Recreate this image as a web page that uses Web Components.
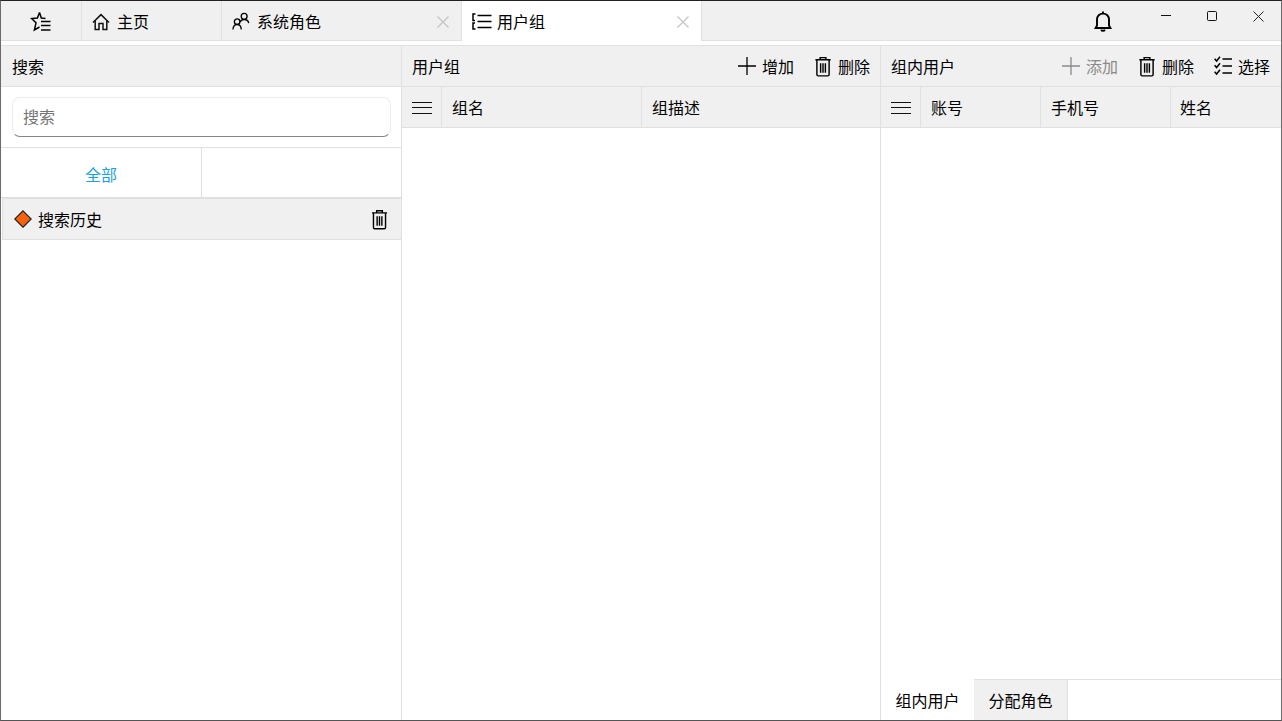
<!DOCTYPE html>
<html lang="zh">
<head>
<meta charset="UTF-8">
<title>用户组</title>
<style>
  html, body { margin: 0; height: 100%; overflow: hidden; background: #fff; }
  body { font: 16px "Noto Sans CJK SC", sans-serif; color: #000; }
</style>
</head>
<body>
<app-window>
  <title-bar slot="top">
    <nav-tab kind="fav" icon="fav" style="width:81px"></nav-tab>
    <nav-tab icon="home" style="width:140px">主页</nav-tab>
    <nav-tab icon="role" closable style="width:240px">系统角色</nav-tab>
    <nav-tab icon="group" closable active style="width:240px">用户组</nav-tab>
  </title-bar>

  <side-panel slot="left"></side-panel>

  <list-panel slot="mid" style="width:478px">
    <span slot="title">用户组</span>
    <tool-btn slot="tools" icon="plus">增加</tool-btn>
    <tool-btn slot="tools" icon="trash">删除</tool-btn>
    <col-head slot="cols" style="width:200px">组名</col-head>
    <col-head slot="cols" style="flex:1;border:0">组描述</col-head>
  </list-panel>

  <list-panel slot="right" style="width:400px;--pad-right:11px">
    <span slot="title">组内用户</span>
    <tool-btn slot="tools" icon="plus" disabled>添加</tool-btn>
    <tool-btn slot="tools" icon="trash">删除</tool-btn>
    <tool-btn slot="tools" icon="check">选择</tool-btn>
    <col-head slot="cols" style="width:120px">账号</col-head>
    <col-head slot="cols" style="width:130px">手机号</col-head>
    <col-head slot="cols" style="flex:1;border:0;padding-left:9px">姓名</col-head>
    <bottom-tabs slot="footer"></bottom-tabs>
  </list-panel>
</app-window>

<script>
  const ICONS = {
    fav: '<svg width="22" height="21" viewBox="0 0 22 21" fill="none" stroke="#000" stroke-width="1.5"><path d="M9.5 1.5 11.3 7 15.5 7.4M9.5 1.5 7.4 7 1.6 7.6 6 11.8 4.4 19 9.5 16"/><path d="M11 10.5H20.5M11 14.5H20.5M11 19H20.5" stroke-width="1.5"/></svg>',
    home: '<svg width="18" height="18" viewBox="0 0 18 18" fill="none" stroke="#111" stroke-width="1.5"><path d="M1 9.5 9 1.6 17 9.5"/><path d="M3.2 7.8V16.5H7V10.5H11V16.5H14.8V7.8"/></svg>',
    role: '<svg width="19" height="19" viewBox="0 0 20 20" fill="none" stroke="#000" stroke-width="1.4"><circle cx="12.8" cy="4.6" r="3.1"/><path d="M8.6 10.6C9.2 8.9 10.8 7.9 12.8 7.9 15.2 7.9 17.2 9.4 17.6 11.6"/><circle cx="5.4" cy="10.2" r="2.9"/><path d="M1 18.4C1.2 15.2 3 13.2 5.4 13.2 7.8 13.2 9.6 15.2 9.8 18.4"/></svg>',
    group: '<svg width="20" height="18" viewBox="0 0 20 18" fill="none" stroke="#000"><path d="M3.5 1H1V7.5H3M3 10H1V16H3.5" stroke-width="1.5"/><path d="M5.5 2.5H19.5M5.5 8.5H19.5M5.5 14.5H19.5" stroke-width="1.3"/></svg>',
    plus: '<svg width="18" height="18" viewBox="0 0 18 18" stroke="currentColor" stroke-width="1.3"><path d="M9 0V18M0 9H18"/></svg>',
    trash: '<svg width="18" height="21" viewBox="0 0 18 22" fill="none" stroke="#000" stroke-width="1.5"><path d="M1 4H17M6 4V1.7H12V4"/><path d="M2.6 4V19.4Q2.6 20.8 4 20.8H14Q15.4 20.8 15.4 19.4V4"/><path d="M6.5 7.5V17.5M9 7.5V17.5M11.5 7.5V17.5"/></svg>',
    check: '<svg width="18" height="20" viewBox="0 0 18 20" fill="none" stroke="#000" stroke-width="1.5"><path d="M.6 2.8 2.6 5 6 .8M.6 9.3 2.6 11.5 6 7.3M.6 15.8 2.6 18 6 13.8"/><path d="M8.5 3H18M8.5 10H18M8.5 17H18"/></svg>',
    menu: '<svg width="20" height="13" viewBox="0 0 20 13" stroke="#111" shape-rendering="crispEdges"><path d="M0 1.5H20M0 6.5H20M0 12.5H20"/></svg>'
  };

  class AppWindow extends HTMLElement {
    constructor() {
      super();
      this.attachShadow({ mode: 'open' }).innerHTML = `
        <style>
          :host { display: flex; flex-direction: column; box-sizing: border-box; height: 721px; width: 1282px;
            border: 1px solid #6b6b6b; border-top-color: #222; border-bottom-color: #555; background: #fff; }
          .body { flex: 1; display: flex; min-height: 0; margin-top: 4px; border-top: 1px solid #e2e2e2; }
        </style>
        <slot name="top"></slot>
        <div class="body">
          <slot name="left"></slot>
          <slot name="mid"></slot>
          <slot name="right"></slot>
        </div>`;
    }
  }

  class TitleBar extends HTMLElement {
    constructor() {
      super();
      this.attachShadow({ mode: 'open' }).innerHTML = `
        <style>
          :host { display: flex; height: 40px; box-sizing: border-box; background: #f0f0f0; border-bottom: 1px solid #e0e0e0; }
          .tabs { display: flex; }
          .fill { flex: 1; }
          .bell { width: 22px; display: flex; justify-content: center; padding-top: 10px; margin-right: 29px; }
          .win { display: flex; width: 138px; }
          .win div { width: 46px; display: flex; justify-content: center; padding-top: 10px; box-sizing: border-box; }
        </style>
        <div class="tabs"><slot></slot></div>
        <div class="fill"></div>
        <div class="bell">
          <svg width="18" height="21" viewBox="0 0 18 21" fill="none" stroke="#000" stroke-width="1.9"><path d="M1.6 17H16.4L15 14.5V8.5C15 5 12.5 2.6 9 2.6 5.5 2.6 3 5 3 8.5V14.5Z"/><path d="M9 .4V2.6"/><path d="M7.2 18.6A1.9 1.9 0 0 0 10.8 18.6" stroke-width="1.9"/></svg>
        </div>
        <div class="win">
          <div><svg width="10" height="10" viewBox="0 0 10 10" stroke="#111"><path d="M0 4.5H10"/></svg></div>
          <div><svg width="10" height="10" viewBox="0 0 10 10" fill="none" stroke="#111"><rect x=".5" y=".5" width="9" height="9" rx="1"/></svg></div>
          <div><svg width="11" height="11" viewBox="0 0 11 11" stroke="#222"><path d="M.5 .5 10.5 10.5M10.5 .5 .5 10.5"/></svg></div>
        </div>`;
    }
  }

  class NavTab extends HTMLElement {
    connectedCallback() {
      if (this.shadowRoot) return;
      const close = this.hasAttribute('closable')
        ? '<svg class="x" width="12" height="12" viewBox="0 0 12 12" stroke="#c4c4c4" stroke-width="1.2"><path d="M.5 .5 11.5 11.5M11.5 .5 .5 11.5"/></svg>' : '';
      const isFav = this.getAttribute('kind') === 'fav';
      this.attachShadow({ mode: 'open' }).innerHTML = `
        <style>
          :host { display: flex; align-items: center; box-sizing: border-box; height: 39px; border-right: 1px solid #e0e0e0;
            padding: 2px 0 0 ${isFav ? 0 : 10}px; position: relative; }
          :host([active]) { background: #fff; height: 40px; padding-bottom: 1px; z-index: 1; }
          :host([kind="fav"]) { justify-content: center; }
          .ic { display: flex; width: 20px; margin-right: 5px; flex: none; }
          :host([kind="fav"]) .ic { width: auto; margin: 0; }
          .t { line-height: 22px; white-space: nowrap; margin-bottom: 2px; }
          .x { position: absolute; right: 12px; top: 15px; }
        </style>
        <span class="ic">${ICONS[this.getAttribute('icon')]}</span>
        <span class="t"><slot></slot></span>${close}`;
    }
  }

  class SidePanel extends HTMLElement {
    constructor() {
      super();
      this.attachShadow({ mode: 'open' }).innerHTML = `
        <style>
          :host { display: flex; flex-direction: column; width: 401px; box-sizing: border-box; border-right: 1px solid #e0e0e0; flex: none; }
          .head { height: 41px; box-sizing: border-box; background: #f0f0f0; border-bottom: 1px solid #e0e0e0; display: flex; align-items: center; padding-left: 11px; }
          .search { height: 61px; box-sizing: border-box; padding: 10px 10px 0 11px; border-bottom: 1px solid #e0e0e0; }
          .box { height: 40px; box-sizing: border-box; border: 1px solid #ececec; border-bottom: 1px solid #858585; border-radius: 8px;
            padding: 0 0 2px 10px; display: flex; align-items: center; color: #757575; }
          .cats { display: flex; height: 50px; box-sizing: border-box; border-bottom: 1px solid #e0e0e0; }
          .cat { width: 201px; box-sizing: border-box; border-right: 1px solid #e0e0e0; display: flex; align-items: center; justify-content: center; color: #1ba1e2; padding-top: 2px; }
          .hist { height: 42px; box-sizing: border-box; margin-left: 1px; background: #f0f0f0; border: 1px solid #e0e0e0; border-right: 0;
            display: flex; align-items: center; padding-left: 11px; }
          .hist span { margin-left: 6px; flex: 1; }
          .hist svg.trash { margin-right: 13px; }
        </style>
        <div class="head">搜索</div>
        <div class="search"><div class="box">搜索</div></div>
        <div class="cats"><div class="cat">全部</div></div>
        <div class="hist">
          <svg width="18" height="18" viewBox="0 0 18 18"><path d="M9 .8 17.2 9 9 17.2 .8 9Z" fill="#f7630c" stroke="#222" stroke-width="1.2"/></svg>
          <span>搜索历史</span>
          <svg class="trash" width="17" height="21" viewBox="0 0 18 22" fill="none" stroke="#000" stroke-width="1.5"><path d="M1 4H17M6 4V1.7H12V4"/><path d="M2.6 4V19.4Q2.6 20.8 4 20.8H14Q15.4 20.8 15.4 19.4V4"/><path d="M6.5 7.5V17.5M9 7.5V17.5M11.5 7.5V17.5"/></svg>
        </div>`;
    }
  }

  class ListPanel extends HTMLElement {
    constructor() {
      super();
      this.attachShadow({ mode: 'open' }).innerHTML = `
        <style>
          :host { display: flex; flex-direction: column; box-sizing: content-box; border-right: 1px solid #e0e0e0; flex: none; }
          :host(:last-child) { border-right: 0; }
          .head { height: 41px; box-sizing: border-box; background: #f0f0f0; border-bottom: 1px solid #e0e0e0; display: flex; align-items: center; padding: 0 var(--pad-right, 10px) 0 10px; }
          .tools { margin-left: auto; display: flex; gap: 20px; }
          .cols { height: 41px; box-sizing: border-box; background: #f0f0f0; border-bottom: 1px solid #e0e0e0; display: flex; }
          .menu { width: 39px; border-right: 1px solid #e0e0e0; display: flex; align-items: center; justify-content: center; }
          .rows { flex: 1; }
        </style>
        <div class="head"><slot name="title"></slot><div class="tools"><slot name="tools"></slot></div></div>
        <div class="cols"><div class="menu">${ICONS.menu}</div><slot name="cols"></slot></div>
        <div class="rows"></div>
        <slot name="footer"></slot>`;
    }
  }

  class ToolBtn extends HTMLElement {
    connectedCallback() {
      if (this.shadowRoot) return;
      this.attachShadow({ mode: 'open' }).innerHTML = `
        <style>
          :host { display: flex; align-items: center; gap: 6px; color: #000; }
          :host([disabled]) { color: #8a8a8a; }
          .ic { display: flex; }
        </style>
        <span class="ic">${ICONS[this.getAttribute('icon')]}</span><slot></slot>`;
    }
  }

  class ColHead extends HTMLElement {
    constructor() {
      super();
      this.attachShadow({ mode: 'open' }).innerHTML = `
        <style>
          :host { display: flex; align-items: center; box-sizing: border-box; padding-left: 10px; border-right: 1px solid #e0e0e0; }
        </style><slot></slot>`;
    }
  }

  class BottomTabs extends HTMLElement {
    constructor() {
      super();
      this.attachShadow({ mode: 'open' }).innerHTML = `
        <style>
          :host { display: flex; height: 41px; box-sizing: border-box; border-top: 1px solid #e0e0e0; }
          div { display: flex; align-items: center; justify-content: center; }
          .on { width: 93px; background: #fff; margin-top: -1px; }
          .off { width: 94px; box-sizing: border-box; background: #f0f0f0; border-right: 1px solid #e0e0e0; }
        </style>
        <div class="on">组内用户</div><div class="off">分配角色</div>`;
    }
  }

  customElements.define('app-window', AppWindow);
  customElements.define('title-bar', TitleBar);
  customElements.define('nav-tab', NavTab);
  customElements.define('side-panel', SidePanel);
  customElements.define('list-panel', ListPanel);
  customElements.define('tool-btn', ToolBtn);
  customElements.define('col-head', ColHead);
  customElements.define('bottom-tabs', BottomTabs);
</script>
</body>
</html>
